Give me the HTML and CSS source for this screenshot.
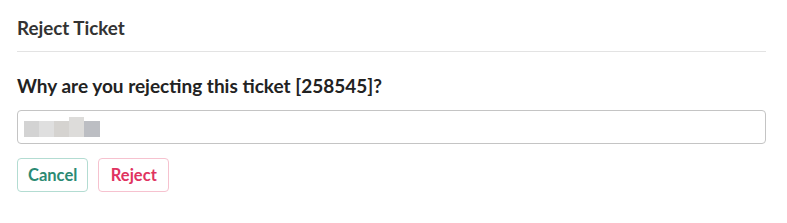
FILE: index.html
```html
<!DOCTYPE html>
<html>
<head>
<meta charset="utf-8">
<link rel="stylesheet" href="styles.css">
</head>
<body>
<div class="dialog">
  <div class="header">Reject Ticket</div>
  <div class="body">
    <label class="question" for="reason">Why are you rejecting this ticket [258545]?</label>
    <div class="input">
      <div class="blur">
        <span class="b b1"></span><span class="b b2"></span><span class="b b3"></span><span class="b b4"></span><span class="b b5"></span>
      </div>
    </div>
    <div class="actions">
      <button class="btn cancel">Cancel</button>
      <button class="btn reject">Reject</button>
    </div>
  </div>
</div>
</body>
</html>
```
FILE: styles.css
```css
html, body {
  margin: 0;
  padding: 0;
  background: #ffffff;
}
body {
  font-family: Lato, "Open Sans", sans-serif;
  color: #333333;
}
.dialog {
  padding: 17px 21px 0 17px;
}
.header {
  font-size: 18.8px;
  font-weight: 700;
  line-height: 22px;
  padding-bottom: 12px;
  border-bottom: 1px solid #e3e3e3;
  color: #333;
}
.body {
  padding-top: 23px;
}
.question {
  display: block;
  font-size: 19px;
  font-weight: 700;
  line-height: 22px;
  color: #222;
}
.input {
  margin-top: 13px;
  height: 32px;
  border: 1px solid #c4c4c4;
  border-radius: 4px;
  display: flex;
  align-items: center;
  padding-left: 6px;
}
.blur {
  display: flex;
  align-items: flex-end;
  height: 20px;
}
.b {
  display: block;
  width: 15px;
  height: 16px;
}
.b1 { background: #d3d3d3; }
.b2 { background: #dfdfdf; }
.b3 { background: #d5d3d0; }
.b4 { background: #dddcda; height: 20px; }
.b5 { background: #bcbec3; width: 16px; }
.actions {
  margin-top: 14px;
  display: flex;
  gap: 10px;
}
.btn {
  font-family: Lato, "Open Sans", sans-serif;
  font-size: 16.5px;
  font-weight: 700;
  height: 34px;
  padding: 0 10px;
  background: #fff;
  border-radius: 4px;
  cursor: pointer;
}
.cancel {
  color: #2b8a73;
  border: 1px solid #b3dcd2;
}
.reject {
  padding: 0 11.5px;
  color: #e0335f;
  border: 1px solid #f6c2cf;
}
```
